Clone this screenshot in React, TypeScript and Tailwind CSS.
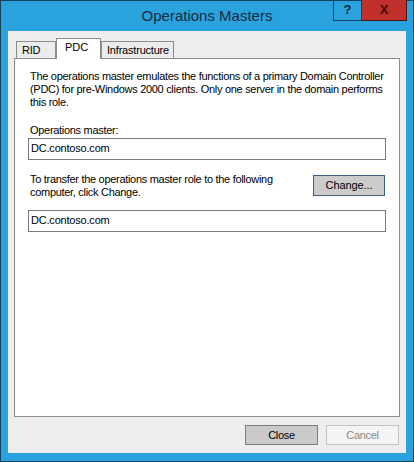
import React from "react";

const font = { fontFamily: '"Liberation Sans", Arial, sans-serif' };

const Tab = ({ label, active }: { label: string; active?: boolean }) => {
  if (active) {
    return (
      <div className="relative z-10 -mb-px h-[21px] w-[45px] bg-white border border-b-0 border-[#8d8d8d] pl-[8px] pt-[2px] text-[11px] leading-[13px] text-black">
        {label}
      </div>
    );
  }
  return (
    <div className="h-[17px] bg-[#ececec] border border-b-0 border-[#8d8d8d] px-[5px] pt-[2px] text-[11px] leading-[13px] tracking-[-0.2px] text-black">
      {label}
    </div>
  );
};

const Field = ({ value }: { value: string }) => (
  <div className="h-[22px] border border-[#7a7a7a] bg-white pl-[2px] pt-[3px] text-[11px] leading-[13px] tracking-[-0.2px] text-black">
    {value}
  </div>
);

export default function App() {
  return (
    <div
      className="w-[414px] h-[462px] bg-[#29a2dd] border border-[#15435f] flex flex-col"
      style={font}
    >
      {/* title bar */}
      <div className="h-[30px] grid grid-cols-[80px_1fr_80px]">
        <div />
        <div className="text-center text-[15px] text-[#1b2a3c] pt-[4px]">Operations Masters</div>
        <div className="flex justify-end pr-[6px]">
          <div className="mt-[-1px] h-[21px] w-[29px] border border-[#15435f] border-t-0 flex items-center justify-center text-[13px] font-bold text-[#10253a]">
            ?
          </div>
          <div className="mt-[-1px] h-[21px] w-[45px] bg-[#c1302a] border border-l-0 border-t-0 border-[#4a1512] flex items-center justify-center text-[13px] font-bold text-[#3a0d0a]">
            X
          </div>
        </div>
      </div>

      {/* client area */}
      <div className="mx-[7px] mb-[8px] flex-1 bg-[#f0edf0] flex flex-col pt-[7px] px-[6px]">
        <div className="flex items-end ml-[2px]">
          <div className="w-[40px]">
            <Tab label="RID" />
          </div>
          <Tab label="PDC" active />
          <div className="w-[73px]">
            <Tab label="Infrastructure" />
          </div>
        </div>

        <div className="h-[359px] bg-white border border-[#8d8d8d] px-[13px] text-[11px] leading-[13px] tracking-[-0.3px] text-black">
          <p className="mt-[11px] pl-[2px] whitespace-nowrap">
            The operations master emulates the functions of a primary Domain Controller
            <br />
            (PDC) for pre-Windows 2000 clients. Only one server in the domain performs
            <br />
            this role.
          </p>
          <p className="mt-[15px] pl-[2px]">Operations master:</p>
          <div className="mt-[1px]">
            <Field value="DC.contoso.com" />
          </div>
          <div className="mt-[13px] flex items-start justify-between">
            <p className="pl-[2px] whitespace-nowrap">
              To transfer the operations master role to the following
              <br />
              computer, click Change.
            </p>
            <button className="mt-[2px] mr-[1px] h-[21px] w-[72px] bg-[#cccccc] border border-[#3d5f80] text-[11px] leading-[13px] tracking-[-0.1px] text-black">
              Change...
            </button>
          </div>
          <div className="mt-[11px]">
            <Field value="DC.contoso.com" />
          </div>
        </div>

        <div className="mt-[8px] flex justify-end gap-[8px] pr-px">
          <button className="h-[20px] w-[73px] bg-[#cacaca] border border-[#7d7d7d] text-[11px] leading-[13px] tracking-[-0.3px] text-black">
            Close
          </button>
          <button className="h-[20px] w-[73px] bg-[#f4f3f5] border border-[#c3c3c3] text-[11px] leading-[13px] tracking-[-0.3px] text-[#8a8a8a]">
            Cancel
          </button>
        </div>
      </div>
    </div>
  );
}
